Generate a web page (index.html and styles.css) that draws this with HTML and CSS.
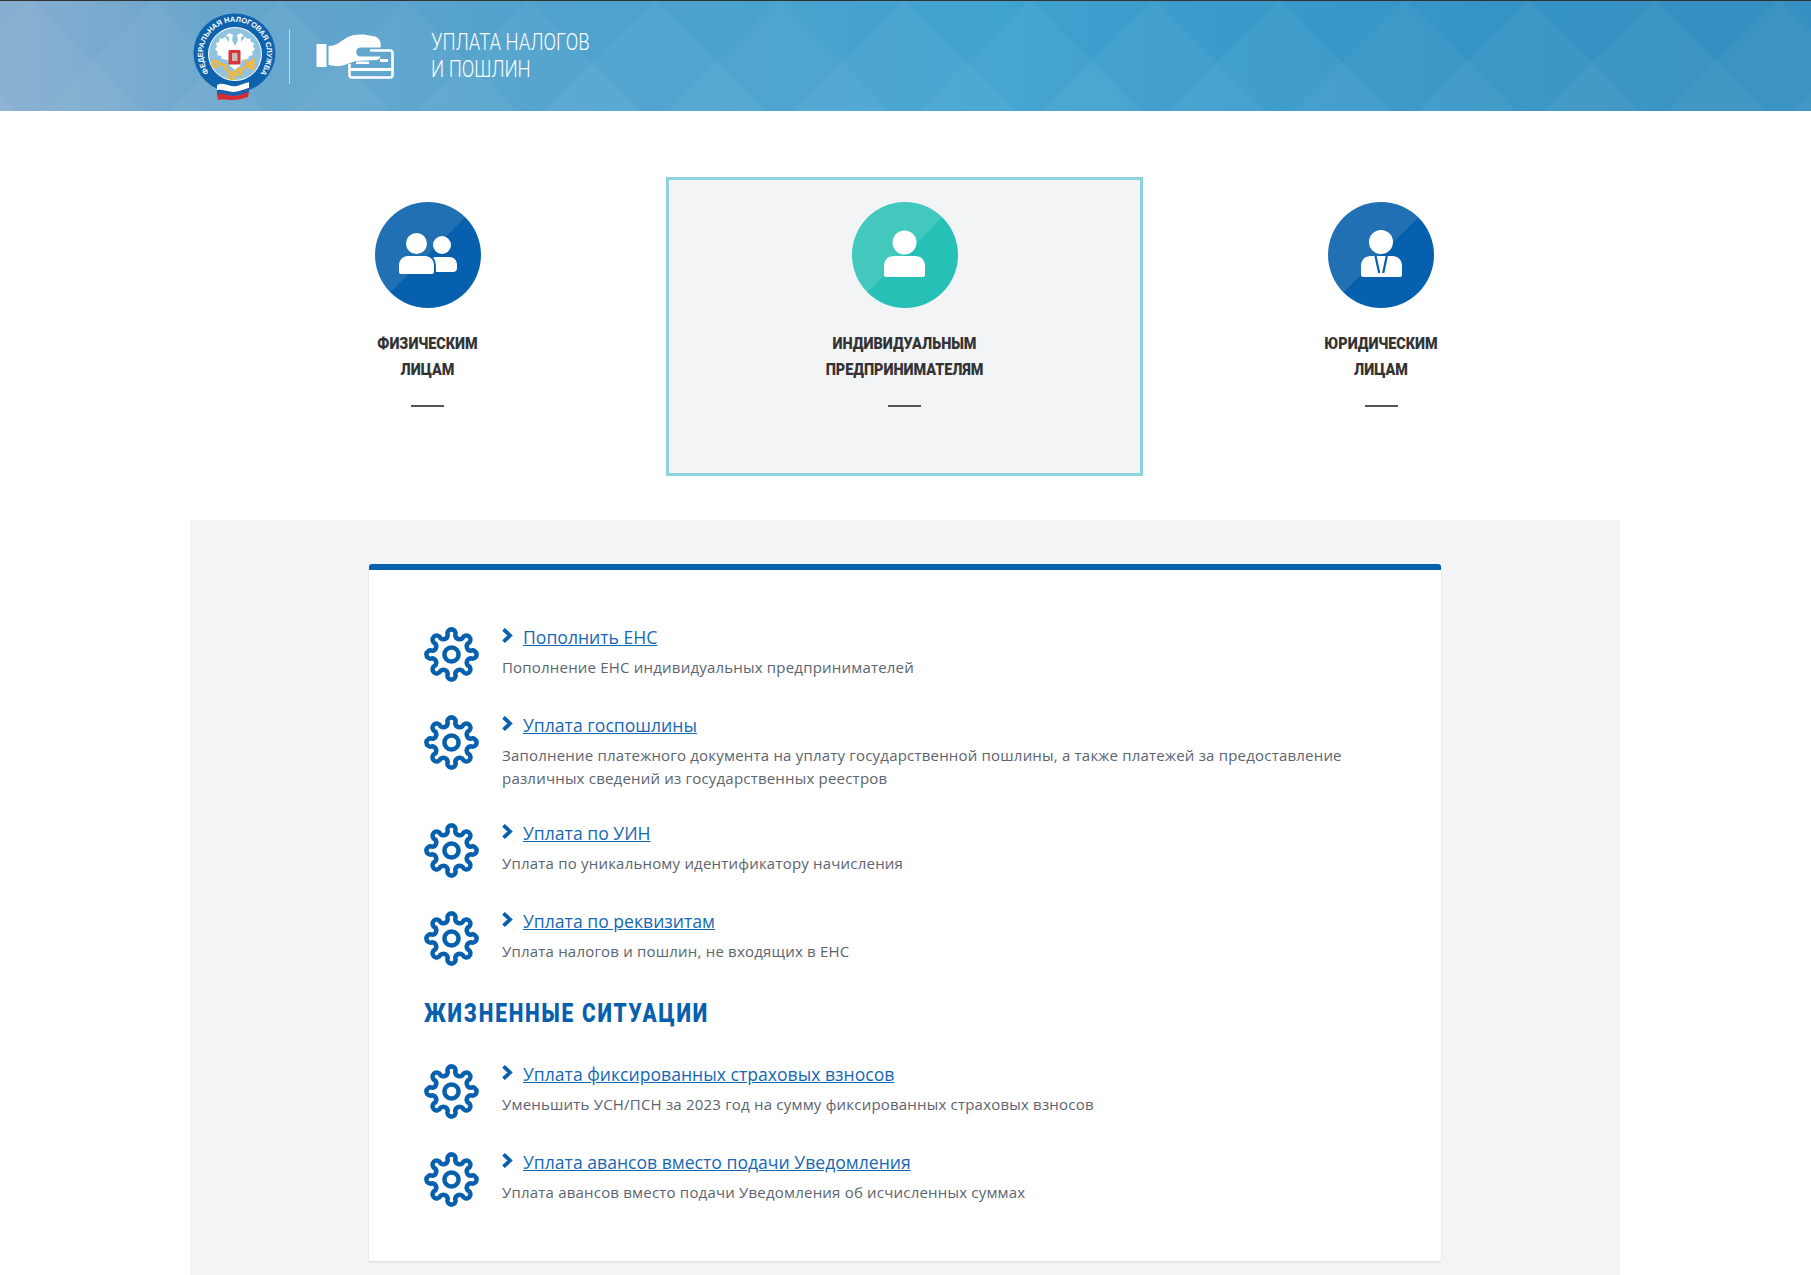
FILE: index.html
```html
<html lang="ru">
<head>
    <meta charset="UTF-8">
    <meta name="viewport" content="width=device-width, initial-scale=1.0">
    <title>Уплата налогов и пошлин</title>
    <link rel="stylesheet" href="styles.css">
</head>
<body>
    <svg class="defs" width="0" height="0">
        <symbol id="gear" viewBox="0 0 56 56">
            <path fill="none" stroke="#0660ae" stroke-width="4.6" d="M24.18 8.37 A4.2 4.2 0 1 1 31.82 8.37 A4.5 4.5 0 0 0 39.18 11.42 A4.2 4.2 0 1 1 44.58 16.82 A4.5 4.5 0 0 0 47.63 24.18 A4.2 4.2 0 1 1 47.63 31.82 A4.5 4.5 0 0 0 44.58 39.18 A4.2 4.2 0 1 1 39.18 44.58 A4.5 4.5 0 0 0 31.82 47.63 A4.2 4.2 0 1 1 24.18 47.63 A4.5 4.5 0 0 0 16.82 44.58 A4.2 4.2 0 1 1 11.42 39.18 A4.5 4.5 0 0 0 8.37 31.82 A4.2 4.2 0 1 1 8.37 24.18 A4.5 4.5 0 0 0 11.42 16.82 A4.2 4.2 0 1 1 16.82 11.42 A4.5 4.5 0 0 0 24.18 8.37 Z"/>
            <circle cx="28" cy="28" r="7.2" fill="none" stroke="#0660ae" stroke-width="4.6"/>
        </symbol>
        <symbol id="chevron" viewBox="0 0 11 15">
            <polyline points="1.500,1.300 8,7.500 1.500,13.700" fill="none" stroke="#0660ae" stroke-width="3.800"/>
        </symbol>
    </svg>

    <header class="header">
        <!-- diamond pattern behind the logo -->
        <svg class="header-bg" width="1811" height="111">
            <defs>
                <pattern id="diamonds" x="-33" y="0" width="125" height="125" patternUnits="userSpaceOnUse">
                    <polygon points="0,62 62.5,0 125,62 62.5,125" fill="#fff" fill-opacity="0.035"/>
                    <polygon points="0,62 62.5,125 0,125" fill="#fff" fill-opacity="0.07"/>
                    <polygon points="125,62 125,125 62.5,125" fill="#fff" fill-opacity="0.07"/>
                </pattern>
            </defs>
            <rect width="1811" height="111" fill="url(#diamonds)"/>
        </svg>
        <div class="header-inner">
            <svg class="emblem" width="84" height="88" viewBox="0 0 84 88">
                <ellipse cx="42.5" cy="40" rx="41" ry="39.5" fill="#0f62ae"/>
                <circle cx="43" cy="41" r="27" fill="#fff"/>
                <circle cx="43" cy="41" r="26" fill="#8fc3e0"/>
                <!-- eagle -->
                <path fill="#fff" d="M43 33 L40 27 L41 22 L37 20 L34 23 L37 24 L37 29 L33 24 L30 26 L28 25 L27 29 L24 30 L25 34 L23 36 L26 39 L25 42 L29 43 L30 46 L36 47 L38 53 L43 57 L48 53 L50 47 L56 46 L57 43 L61 42 L60 39 L63 36 L61 34 L62 30 L59 29 L58 25 L56 26 L53 24 L49 29 L49 24 L52 23 L49 20 L45 22 L46 27 Z"/>
                <rect x="36.500" y="37" width="12" height="14.500" rx="1" fill="#d8343a"/>
                <rect x="40" y="40" width="5.500" height="8" fill="#c9b9bc"/>
                <g fill="none" stroke="#ecb847" stroke-width="2.600">
                    <path d="M22 48 L36 54"/>
                    <circle cx="23" cy="51" r="3"/>
                    <path d="M63 46 L50 56 L36 62"/>
                    <circle cx="59" cy="52" r="3"/>
                    <circle cx="47" cy="59" r="2.800"/>
                    <circle cx="40" cy="63" r="2.800"/>
                    <path d="M53 47 L62 57"/>
                    <path d="M32 55 L44 63"/>
                </g>
                <path id="ring-text" fill="none" d="M17 59.500 A32 32 0 1 1 69 59.500"/>
                <text class="emblem-text"><textPath href="#ring-text" textLength="141">ФЕДЕРАЛЬНАЯ НАЛОГОВАЯ СЛУЖБА</textPath></text>
                <path fill="#fff" d="M25 72 C32 68 38 75 45 73 C50 71 54 70 57 69 L57 75 C50 77 46 79 40 79 C34 79 30 77 25 78 Z"/>
                <path fill="#1f5fae" d="M25 77 C31 76 35 79 41 79 C47 79 51 77 57 75 L57 80 C50 82 46 83 41 83 C35 83 31 81 25 82 Z"/>
                <path fill="#dd2a2e" d="M25 81 C31 80 35 83 41 83 C47 83 51 81 57 79 L56 84 C50 86 46 87 41 87 C35 87 31 86 26 87 Z"/>
            </svg>
            <div class="header-divider"></div>
            <svg class="hand" width="90" height="60" viewBox="0 0 90 60">
                <rect x="6.5" y="18" width="10" height="23" fill="#fff"/>
                <path fill="none" stroke="#fff" stroke-width="2.6" d="M60 24.5 H80 Q82.500 24.500 82.500 27 V49 Q82.500 51.500 80 51.500 H42 Q39.500 51.500 39.500 49 V38"/>
                <rect x="40" y="42" width="42" height="3" fill="#fff"/>
                <rect x="70" y="33" width="8" height="3" fill="#fff"/>
                <rect x="46" y="35.500" width="13" height="2.500" fill="#fff"/>
                <path fill="#fff" d="M18.500 20 C25 20 29 17 36 12 C41 9 47 8 54 8.500 L65 10.500 C70 12 71.500 17 70.500 21.500 L50 21.500 C45 22 45 30 50 30.500 L70.500 30.500 C70 33 68 34 66 34 L46 35 C39 37 32 41 25 40 L18.500 39 Z"/>
            </svg>
            <div class="header-title">Уплата налогов<br>и пошлин</div>
        </div>
    </header>

    <main class="main">
        <div class="tabs">
            <div class="tab">
                <svg class="tab-icon" width="106" height="106" viewBox="0 0 106 106">
                    <circle cx="67" cy="43" r="9" fill="#fff"/>
                    <path fill="#fff" d="M60 55 H74 C79 55 82 58 82 63 V66 Q82 70 78 70 H61 C61 63 61 58 58 56 Z"/>
                    <circle cx="41.500" cy="41.500" r="10.500" fill="#fff"/>
                    <path fill="#fff" d="M33 54 H50 C55 54 59 58 59 63 V70 Q59 72 57 72 H26 Q24 72 24 70 V63 C24 58 28 54 33 54 Z"/>
                </svg>
                <div class="tab-title">Физическим<br>лицам</div>
                <div class="tab-dash"></div>
            </div>
            <div class="tab tab-active">
                <svg class="tab-icon" width="106" height="106" viewBox="0 0 106 106">
                    <circle cx="52.500" cy="40.500" r="12" fill="#fff"/>
                    <path fill="#fff" d="M42 54 H63 C69 54 73 58 73 64 V73 Q73 75 71 75 H34 Q32 75 32 73 V64 C32 58 36 54 42 54 Z"/>
                </svg>
                <div class="tab-title">Индивидуальным<br>предпринимателям</div>
                <div class="tab-dash"></div>
            </div>
            <div class="tab">
                <svg class="tab-icon" width="106" height="106" viewBox="0 0 106 106">
                    <circle cx="53" cy="40" r="12" fill="#fff"/>
                    <path fill="#fff" d="M43 54 H64 C70 54 74 58 74 64 V73 Q74 75 72 75 H35 Q33 75 33 73 V64 C33 58 37 54 43 54 Z"/>
                    <path fill="none" stroke="#0660ae" stroke-width="2.200" d="M47.500 54 L51.200 71 M58.800 54 L55.200 71"/>
                </svg>
                <div class="tab-title">Юридическим<br>лицам</div>
                <div class="tab-dash"></div>
            </div>
        </div>

        <section class="panel">
            <div class="card">
                <div class="row">
                    <svg class="gear" width="55" height="55"><use href="#gear"/></svg>
                    <div class="row-text">
                        <div class="row-head">
                            <svg class="chevron" width="11" height="15"><use href="#chevron"/></svg>
                            <a class="row-link" href="#">Пополнить ЕНС</a>
                        </div>
                        <p class="row-desc">Пополнение ЕНС индивидуальных предпринимателей</p>
                    </div>
                </div>
                <div class="row">
                    <svg class="gear" width="55" height="55"><use href="#gear"/></svg>
                    <div class="row-text">
                        <div class="row-head">
                            <svg class="chevron" width="11" height="15"><use href="#chevron"/></svg>
                            <a class="row-link" href="#">Уплата госпошлины</a>
                        </div>
                        <p class="row-desc">Заполнение платежного документа на уплату государственной пошлины, а также платежей за предоставление различных сведений из государственных реестров</p>
                    </div>
                </div>
                <div class="row">
                    <svg class="gear" width="55" height="55"><use href="#gear"/></svg>
                    <div class="row-text">
                        <div class="row-head">
                            <svg class="chevron" width="11" height="15"><use href="#chevron"/></svg>
                            <a class="row-link" href="#">Уплата по УИН</a>
                        </div>
                        <p class="row-desc">Уплата по уникальному идентификатору начисления</p>
                    </div>
                </div>
                <div class="row">
                    <svg class="gear" width="55" height="55"><use href="#gear"/></svg>
                    <div class="row-text">
                        <div class="row-head">
                            <svg class="chevron" width="11" height="15"><use href="#chevron"/></svg>
                            <a class="row-link" href="#">Уплата по реквизитам</a>
                        </div>
                        <p class="row-desc">Уплата налогов и пошлин, не входящих в ЕНС</p>
                    </div>
                </div>

                <h2 class="card-heading">Жизненные ситуации</h2>

                <div class="row">
                    <svg class="gear" width="55" height="55"><use href="#gear"/></svg>
                    <div class="row-text">
                        <div class="row-head">
                            <svg class="chevron" width="11" height="15"><use href="#chevron"/></svg>
                            <a class="row-link" href="#">Уплата фиксированных страховых взносов</a>
                        </div>
                        <p class="row-desc">Уменьшить УСН/ПСН за 2023 год на сумму фиксированных страховых взносов</p>
                    </div>
                </div>
                <div class="row">
                    <svg class="gear" width="55" height="55"><use href="#gear"/></svg>
                    <div class="row-text">
                        <div class="row-head">
                            <svg class="chevron" width="11" height="15"><use href="#chevron"/></svg>
                            <a class="row-link" href="#">Уплата авансов вместо подачи Уведомления</a>
                        </div>
                        <p class="row-desc">Уплата авансов вместо подачи Уведомления об исчисленных суммах</p>
                    </div>
                </div>
            </div>
        </section>
    </main>
</body>
</html>
```

FILE: styles.css
```css
html, body {
    margin: 0;
    padding: 0;
    background-color: #fff;
    overflow: hidden;
}

body {
    font-family: "Open Sans", sans-serif;
    height: 1275px;
}

.defs {
    position: absolute;
}

.header {
    position: relative;
    height: 110px;
    border-top: 1px solid #333;
    background: linear-gradient(90deg, #88aed0 0, #6aa6cc 200px, #52a2cc 500px, #40a2cf 1000px, #3797c8 1350px, #3490c0 1700px, #3490c0 100%);
    overflow: hidden;
}

.header-bg {
    position: absolute;
    left: 0;
    top: -1px;
}

.header-inner {
    position: relative;
    display: flex;
    align-items: center;
    height: 110px;
    padding-left: 192px;
}

.emblem {
    margin-top: 2px;
}

.emblem-text {
    font-family: "Liberation Sans", sans-serif;
    font-size: 7.5px;
    font-weight: bold;
    fill: #fff;
}

.header-divider {
    width: 1px;
    height: 55px;
    margin-left: 13px;
    background-color: #b9dbec;
}

.hand {
    margin-left: 20px;
}

.header-title {
    margin-left: 31px;
    font-family: "Roboto", sans-serif;
    font-size: 24px;
    font-weight: 300;
    line-height: 27px;
    color: #fff;
    text-transform: uppercase;
    white-space: nowrap;
    transform: scaleX(0.77);
    transform-origin: left center;
}

.main {
    width: 1430px;
    margin-left: 190px;
}

.tabs {
    display: grid;
    grid-template-columns: 477px 477px 476px;
    margin-top: 66px;
    height: 299px;
    margin-left: -1px;
}

.tab {
    box-sizing: border-box;
    height: 299px;
    padding-top: 22px;
    border: 3px solid transparent;
    text-align: center;
}

.tab-icon {
    display: block;
    margin: 0 auto;
    border-radius: 50%;
    background: linear-gradient(135deg, #2070b3 50%, #0660ae 50%);
}

.tab-active {
    background-color: #f3f4f6;
    border-color: #8dd3de;
}

.tab-active .tab-icon {
    background: linear-gradient(135deg, #42c8bc 50%, #27c0b6 50%);
}

.tab-title {
    margin-top: 23px;
    font-family: "Roboto", sans-serif;
    font-size: 16px;
    font-weight: 900;
    line-height: 26px;
    color: #333;
    text-transform: uppercase;
    transform: scaleX(0.9);
}

.tab-dash {
    width: 33px;
    height: 2px;
    margin: 22px auto 0;
    background-color: #555;
}

.panel {
    height: 755px;
    margin-top: 44px;
    padding: 44px 179px 0;
    box-sizing: border-box;
    background-color: #f3f4f6;
}

.card {
    box-sizing: border-box;
    height: 697px;
    padding: 57px 55px 0;
    background-color: #fff;
    border-top: 6px solid #0660ae;
    border-radius: 3px 3px 0 0;
    box-shadow: 0 1px 2px rgba(0, 0, 0, 0.12);
}

.row {
    display: flex;
    margin-bottom: 33px;
}

.gear {
    flex-shrink: 0;
    margin-right: 23px;
}

.row-text {
    flex: 1;
    padding-right: 40px;
}

.row-head {
    display: flex;
    align-items: center;
    height: 20px;
}

.chevron {
    margin: -3px 10px 0 0;
}

.row-link {
    font-size: 17.6px;
    line-height: 20px;
    color: #1667b5;
}

.row-desc {
    margin: 9px 0 0;
    font-size: 15px;
    line-height: 23px;
    letter-spacing: 0.2px;
    color: #5b6470;
}

.card-heading {
    margin: -1px 0 36px;
    font-family: "Roboto", sans-serif;
    font-size: 26px;
    font-weight: 900;
    line-height: 30px;
    letter-spacing: 2.3px;
    color: #0660ae;
    text-transform: uppercase;
    transform: scaleX(0.8);
    transform-origin: left center;
}
```
